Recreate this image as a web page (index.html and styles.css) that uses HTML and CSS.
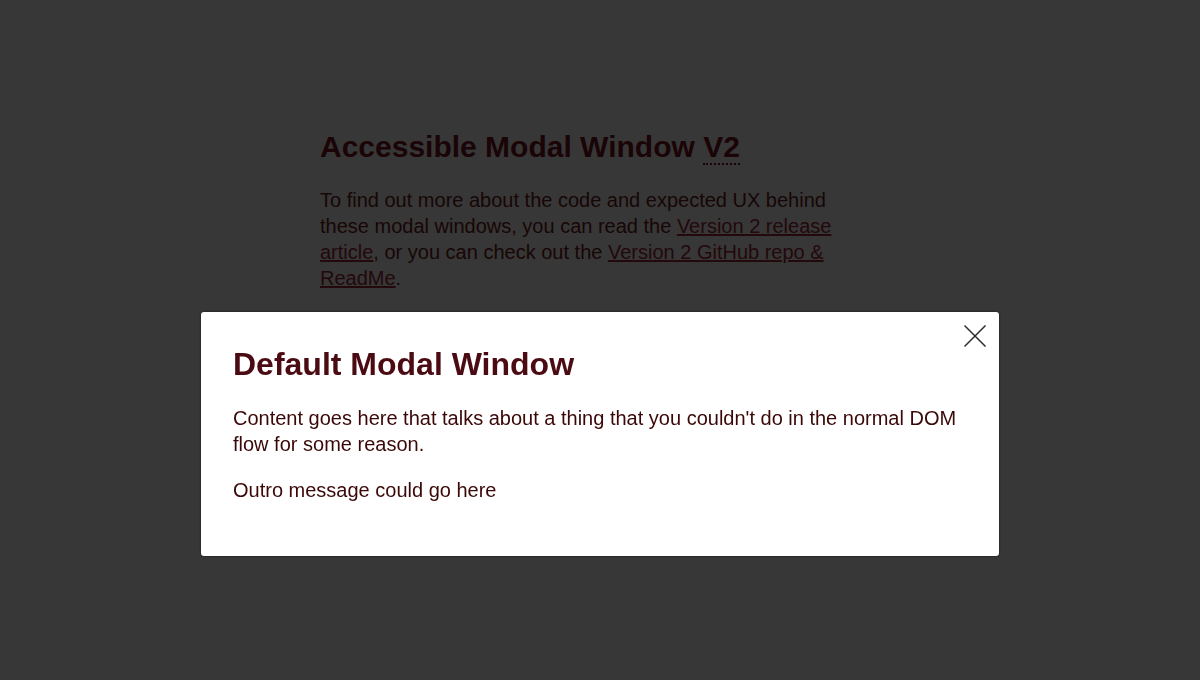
FILE: index.html
```html
<!DOCTYPE html>
<html lang="en">
<head>
<meta charset="utf-8">
<title>Accessible Modal Window V2</title>
<link rel="stylesheet" href="styles.css">
</head>
<body>
<main class="page">
  <h1 class="page-title">Accessible Modal Window <abbr title="Version 2">V2</abbr></h1>
  <p class="page-text">To find out more about the code and expected UX behind these modal windows, you can read the <a href="#">Version 2 release article</a>, or you can check out the <a href="#">Version 2 GitHub repo &amp; ReadMe</a>.</p>
</main>
<div class="overlay">
  <div class="modal" role="dialog" aria-labelledby="modal-title">
    <button class="modal-close" aria-label="Close">
      <svg width="24" height="24" viewBox="0 0 24 24" aria-hidden="true"><path d="M1.5 1.5 L22.5 22.5 M22.5 1.5 L1.5 22.5" stroke="#2b2b2b" stroke-width="1.5" fill="none"/></svg>
    </button>
    <h2 class="modal-title" id="modal-title">Default Modal Window</h2>
    <p class="modal-text">Content goes here that talks about a thing that you couldn't do in the normal DOM flow for some reason.</p>
    <p class="modal-text">Outro message could go here</p>
  </div>
</div>
</body>
</html>
```

FILE: styles.css
```css
html, body {
  margin: 0;
  padding: 0;
  height: 100%;
}
body {
  background: #ffffff;
  font-family: "Liberation Sans", Arial, sans-serif;
  color: #7a1a1e;
}
.page {
  width: 520px;
  margin: 0 auto 0 320px;
  padding-top: 130px;
}
.page-title {
  font-size: 30px;
  line-height: 34px;
  font-weight: bold;
  margin: 0 0 23px;
  color: #7a1422;
}
.page-title abbr {
  text-decoration: none;
  border-bottom: 2px dotted currentColor;
}
.page-text {
  font-size: 20px;
  line-height: 26px;
  margin: 0;
  color: #6e1c1c;
}
.page-text a {
  color: #a02838;
  text-decoration: underline;
}
.overlay {
  position: fixed;
  inset: 0;
  background: rgba(0, 0, 0, 0.785);
}
.modal {
  position: absolute;
  top: 312px;
  left: 201px;
  width: 798px;
  box-sizing: border-box;
  background: #ffffff;
  border-radius: 3px;
  padding: 34px 32px 33px;
  box-shadow: 0 0 3px rgba(0, 0, 0, 0.6);
}
.modal-close {
  position: absolute;
  top: 0;
  right: 0;
  width: 48px;
  height: 48px;
  padding: 0;
  border: 0;
  background: transparent;
  display: flex;
  align-items: center;
  justify-content: center;
  cursor: pointer;
}
.modal-title {
  font-size: 32px;
  line-height: 37px;
  font-weight: bold;
  margin: 0 0 22px;
  color: #4a0b12;
}
.modal-text {
  font-size: 20px;
  line-height: 26px;
  margin: 0 0 20px;
  color: #3b0808;
}
```
